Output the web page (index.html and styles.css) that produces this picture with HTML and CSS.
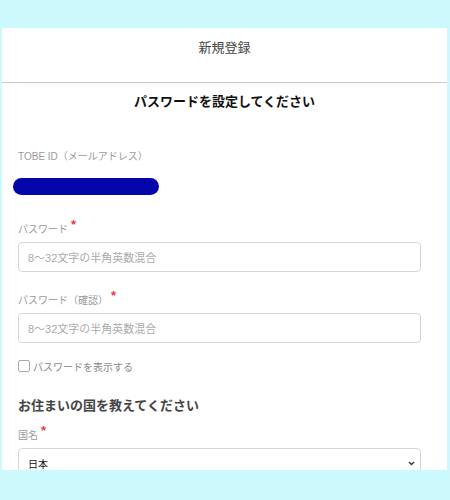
FILE: index.html
```html
<!DOCTYPE html>
<html lang="ja">
<head>
<meta charset="utf-8">
<link rel="stylesheet" href="styles.css">
</head>
<body>
<div class="panel">
  <div class="header">新規登録</div>
  <h1 class="title">パスワードを設定してください</h1>
  <div class="form">
    <div class="label label-id">TOBE ID（メールアドレス）</div>
    <div class="masked"></div>
    <div class="label label-pw">パスワード<span class="req">*</span></div>
    <div class="input"><span class="ph">8〜32文字の半角英数混合</span></div>
    <div class="label label-pw2">パスワード（確認）<span class="req">*</span></div>
    <div class="input"><span class="ph">8〜32文字の半角英数混合</span></div>
    <label class="check"><span class="box"></span><span class="check-text">パスワードを表示する</span></label>
    <h2 class="subtitle">お住まいの国を教えてください</h2>
    <div class="label label-country">国名<span class="req">*</span></div>
    <div class="select"><span class="val">日本</span>
      <svg class="chev" width="7" height="5" viewBox="0 0 7 5"><path d="M1 1 L3.5 3.5 L6 1" fill="none" stroke="#333" stroke-width="1.4"/></svg>
    </div>
  </div>
</div>
</body>
</html>
```
FILE: styles.css
```css
* { box-sizing: border-box; }
html, body { margin: 0; padding: 0; }
body {
  background: #ccf9fc;
  font-family: "Liberation Sans", "Noto Sans CJK JP", sans-serif;
  width: 450px;
  height: 500px;
  overflow: hidden;
}
.panel {
  margin: 28px 3px 0 2px;
  height: 442px;
  background: #fff;
  overflow: hidden;
}
.header {
  height: 55px;
  border-bottom: 1px solid #c8c8c8;
  text-align: center;
  font-size: 13px;
  line-height: 20px;
  padding-top: 10px;
  color: #444;
}
.title {
  margin: 9px 0 0;
  text-align: center;
  font-size: 13px;
  line-height: 20px;
  font-weight: 700;
  color: #111;
}
.form {
  padding: 0 26px 0 16px;
}
.label {
  font-size: 10px;
  line-height: 16px;
  color: #999;
}
.req {
  color: #f03a3a;
  font-size: 13px;
  font-weight: 700;
  position: relative;
  top: -4px;
  margin-left: 3px;
  line-height: 0;
}
.label-id { margin-top: 37px; }
.masked {
  margin: 13px 0 0 -5px;
  width: 146px;
  height: 17px;
  border-radius: 9px;
  background: #0505ac;
}
.label-pw { margin-top: 27px; }
.label-pw2 { margin-top: 21px; }
.label-country { margin-top: 12px; }
.input, .select {
  margin-top: 4px;
  height: 30px;
  border: 1.5px solid #d6d6d6;
  border-radius: 4px;
  display: flex;
  align-items: center;
  padding-left: 9px;
}
.ph {
  font-size: 11px;
  color: #aaa;
}
.check {
  margin-top: 16px;
  display: flex;
  align-items: center;
  height: 14px;
}
.box {
  width: 12px;
  height: 12px;
  border: 1px solid #aaa;
  border-radius: 2px;
  margin-right: 3px;
}
.check-text {
  font-size: 10px;
  color: #888;
}
.subtitle {
  margin: 23px 0 0;
  font-size: 13px;
  line-height: 20px;
  font-weight: 700;
  color: #444;
}
.select {
  justify-content: space-between;
  padding-right: 5px;
}
.val {
  font-size: 10px;
  color: #111;
}
.chev { display: block; }
```
